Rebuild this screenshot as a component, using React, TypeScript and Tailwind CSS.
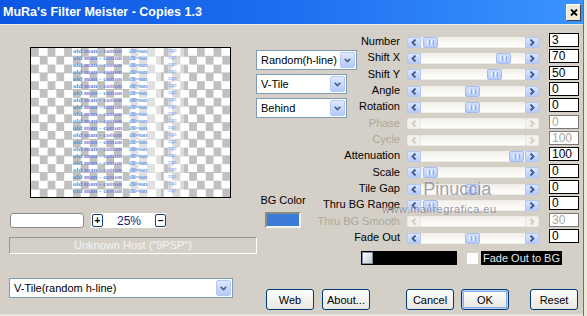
import clsx from 'clsx';

// slider rows: label, thumb offset in track (px), value, disabled
const rows: { label: string; pos?: number; value: string; disabled?: boolean }[] = [
  { label: 'Number', pos: 2, value: '3' },
  { label: 'Shift X', pos: 75, value: '70' },
  { label: 'Shift Y', pos: 66, value: '50' },
  { label: 'Angle', pos: 44, value: '0' },
  { label: 'Rotation', pos: 44, value: '0' },
  { label: 'Phase', value: '0', disabled: true },
  { label: 'Cycle', value: '100', disabled: true },
  { label: 'Attenuation', pos: 88, value: '100' },
  { label: 'Scale', pos: 2, value: '0' },
  { label: 'Tile Gap', pos: 44, value: '0' },
  { label: 'Thru BG Range', pos: 2, value: '0' },
  { label: 'Thru BG Smooth', value: '30', disabled: true },
  { label: 'Fade Out', pos: 44, value: '0' },
];

function ScrollBtn({ dir, disabled }: { dir: 'left' | 'right'; disabled?: boolean }) {
  return (
    <div
      className={clsx(
        'flex h-full w-[14px] shrink-0 items-center justify-center rounded-[2px] border',
        disabled
          ? 'border-[#eceae2] bg-[#f3f2ec]'
          : 'border-[#b3c8f4] bg-gradient-to-b from-[#dce7fe] to-[#b6cbf9]'
      )}
    >
      <svg width="6" height="7" viewBox="0 0 6 7">
        <path
          d={dir === 'left' ? 'M4.5 0.5 L1.5 3.5 L4.5 6.5' : 'M1.5 0.5 L4.5 3.5 L1.5 6.5'}
          stroke={disabled ? '#cfcdc2' : '#3d5588'}
          strokeWidth="1.8"
          fill="none"
        />
      </svg>
    </div>
  );
}

function Slider({ pos, disabled }: { pos?: number; disabled?: boolean }) {
  return (
    <div className="flex h-[11px] w-[132px]">
      <ScrollBtn dir="left" disabled={disabled} />
      <div className="relative flex-1 border-y border-[#efede6] bg-gradient-to-b from-[#f2f0ea] to-[#fefefc]">
        {pos !== undefined && (
          <div
            className="absolute -top-px flex h-[11px] w-[15px] items-center justify-center gap-px rounded-[2px] border border-[#a4bcf2] bg-gradient-to-b from-[#d3e0fd] to-[#b7ccfa]"
            style={{ left: pos }}
          >
            <span className="h-[5px] w-px bg-[#eef4ff]" />
            <span className="h-[5px] w-px bg-[#8eadef]" />
            <span className="h-[5px] w-px bg-[#eef4ff]" />
            <span className="h-[5px] w-px bg-[#8eadef]" />
          </div>
        )}
      </div>
      <ScrollBtn dir="right" disabled={disabled} />
    </div>
  );
}

function Combo({ text, className }: { text: string; className?: string }) {
  return (
    <div className={clsx('flex h-[20px] items-center border border-[#7f9db9] bg-white pl-[4px] pr-px', className)}>
      <span className="flex-1 whitespace-nowrap text-[11px] text-black">{text}</span>
      <div className="flex h-[16px] w-[15px] items-center justify-center rounded-[2px] border border-[#b6c8f2] bg-gradient-to-b from-[#dfe8fe] to-[#b5c9f8]">
        <svg width="7" height="5" viewBox="0 0 7 5">
          <path d="M0.8 0.8 L3.5 3.6 L6.2 0.8" stroke="#4d6185" strokeWidth="1.7" fill="none" />
        </svg>
      </div>
    </div>
  );
}

function Btn({ label, def, className }: { label: string; def?: boolean; className?: string }) {
  return (
    <div
      className={clsx(
        'flex h-[21px] w-[48px] items-center justify-center rounded-[3px] border border-[#003c74] bg-gradient-to-b from-[#ffffff] to-[#e6e5de] text-[11px] text-black',
        def && 'shadow-[inset_0_0_0_1px_#b9d0f6,inset_0_0_0_2px_#89adf0]',
        className
      )}
    >
      {label}
    </div>
  );
}

function Preview() {
  const lines = Array.from({ length: 21 });
  return (
    <div className="ml-[21px] mt-[22px] h-[151px] w-[201px] overflow-hidden border border-black bg-[conic-gradient(#fff_25%,#c0c0c0_0_50%,#fff_0_75%,#c0c0c0_0)] bg-[length:16.6px_16.6px]">
      <div className="flex h-full pl-[42px] font-['Liberation_Serif',serif] text-[7px] font-bold leading-[7px] text-[#5f8fdc]">
        <div className="flex w-[54px] flex-col overflow-hidden">
          {lines.map((_, i) => (
            <span key={i} className="whitespace-nowrap">old man - cotton</span>
          ))}
        </div>
        <div className="ml-[2px] flex w-[32px] flex-col overflow-hidden bg-white/50 text-[#7fa7e6]">
          {lines.map((_, i) => (
            <span key={i} className="whitespace-nowrap tracking-[-0.5px]">đlł=ŧan</span>
          ))}
        </div>
        <div className="ml-[7px] flex w-[16px] flex-col overflow-hidden bg-white/40 text-[#8db0ea]">
          {lines.map((_, i) => (
            <span key={i} className="whitespace-nowrap tracking-[-0.5px]">≡ł≡</span>
          ))}
        </div>
      </div>
    </div>
  );
}

export default function App() {
  return (
    <div className="flex h-[316px] w-[587px] bg-[#ece9d8] font-['Liberation_Sans',Arial,sans-serif]">
      <div className="flex w-[584px] flex-col border-r border-[#6f6f6f] bg-[#d4d0c8]">
        {/* title bar */}
        <div className="flex h-[24px] items-center justify-between bg-gradient-to-r from-[#0c56e2] via-[#1f6ff0] to-[#3a94ff] pl-[3px] pr-[2px]">
          <span className="text-[12.5px] font-bold text-white">MuRa's Filter Meister - Copies 1.3</span>
          <div className="flex h-[17px] w-[15px] items-center justify-center border border-b-[#404040] border-l-white border-r-[#404040] border-t-white bg-[#ece9d8]">
            <svg width="8" height="7" viewBox="0 0 8 7">
              <path d="M1 0.5 L7 6.5 M7 0.5 L1 6.5" stroke="#000" strokeWidth="1.8" />
            </svg>
          </div>
        </div>
        <div className="h-px bg-[#eeece6]" />

        {/* body */}
        <div className="relative flex flex-1 border-b-2 border-[#e8e6df]">
          {/* left column */}
          <div className="flex w-[256px] flex-col pl-[9px]">
            <Preview />
            <div className="mt-[15px] flex h-[15px] items-center">
              <div className="ml-px h-[15px] w-[74px] rounded-[3px] border border-[#8a8a8a] bg-white" />
              <div className="ml-[7px] flex h-[15px] w-[75px] items-center bg-white pl-px">
                <div className="flex h-[13px] w-[12px] items-center justify-center rounded-[2px] border border-[#1c3f6e] text-[10px] font-bold leading-none text-black">+</div>
                <span className="ml-[14px] text-[12px] text-[#0c1f74]">25%</span>
                <div className="ml-[14px] flex h-[13px] w-[12px] items-center justify-center rounded-[2px] border border-[#1c3f6e] text-[10px] font-bold leading-none text-black">–</div>
              </div>
            </div>
            <div className="mt-[9px] flex h-[17px] w-[248px] items-center justify-center border border-b-white border-l-[#9a978f] border-r-white border-t-[#9a978f] text-[11px] text-[#f4f3ef]">
              Unknown Host ("9PSP")
            </div>
            <Combo text="V-Tile(random h-line)" className="mt-[24px] w-[224px]" />
          </div>

          {/* right area */}
          <div className="flex flex-1 flex-col">
            <div className="flex">
              {/* combos and BG color */}
              <div className="flex w-[54px] flex-col pt-[25px]">
                <Combo text="Random(h-line)" className="w-[101px]" />
                <Combo text="V-Tile" className="mt-[4px] w-[91px]" />
                <Combo text="Behind" className="mt-[4px] w-[91px]" />
                <div className="mt-[74px] flex flex-col items-center">
                  <span className="whitespace-nowrap text-[11px] text-black">BG Color</span>
                  <div className="mt-[3px] h-[16px] w-[36px] border-2 border-b-[#f4f3ef] border-l-[#8c8a84] border-r-[#f4f3ef] border-t-[#8c8a84] bg-[#3b7ad8]" />
                </div>
              </div>

              {/* sliders */}
              <div className="flex flex-col pt-[8px]">
                {rows.map((r) => (
                  <div key={r.label} className="flex h-[16.33px] items-center">
                    <span
                      className={clsx(
                        'w-[90px] whitespace-nowrap text-right text-[11px]',
                        r.disabled ? 'text-[#aca899]' : 'text-black'
                      )}
                    >
                      {r.label}
                    </span>
                    <div className="ml-[7px] mt-[2px]">
                      <Slider pos={r.pos} disabled={r.disabled} />
                    </div>
                    <div
                      className={clsx(
                        'ml-[10px] flex h-[14px] w-[30px] items-center self-start border pl-[2px] text-[12px] leading-none',
                        r.disabled ? 'border-[#7a7a7a] bg-white text-[#aca899]' : 'border-black bg-white text-black'
                      )}
                    >
                      {r.value}
                    </div>
                  </div>
                ))}
              </div>
            </div>

            {/* fade out bar */}
            <div className="ml-[105px] mt-[6px] flex items-center">
              <div className="flex h-[14px] w-[96px] items-center bg-black pl-px">
                <div className="h-[12px] w-[11px] border border-[#7b8ba8] bg-gradient-to-br from-white to-[#c8c8c8]" />
              </div>
              <div className="ml-[10px] h-[11px] w-[11px] bg-white" />
              <div className="ml-[3px] flex h-[14px] w-[81px] items-center justify-center bg-black text-[11px] text-[#e8e8e8]">
                Fade Out to BG
              </div>
            </div>

            {/* buttons */}
            <div className="mt-[24px] flex">
              <Btn label="Web" className="ml-[10px]" />
              <Btn label="About..." className="ml-[8px]" />
              <Btn label="Cancel" className="ml-[36px]" />
              <Btn label="OK" def className="ml-[7px]" />
              <Btn label="Reset" className="ml-[21px]" />
            </div>
          </div>

          {/* watermark */}
          <div className="pointer-events-none absolute left-[382px] top-[151px] flex flex-col items-center opacity-70">
            <span className="ml-[36px] text-[18px] text-[#7d7d8c] [text-shadow:0_0_2px_#fff]">Pinuccia</span>
            <span className="-mt-[2px] text-[11px] tracking-[0.5px] text-[#707080] [text-shadow:0_0_2px_#fff]">www.maiiregrafica.eu</span>
          </div>
        </div>
      </div>
    </div>
  );
}
